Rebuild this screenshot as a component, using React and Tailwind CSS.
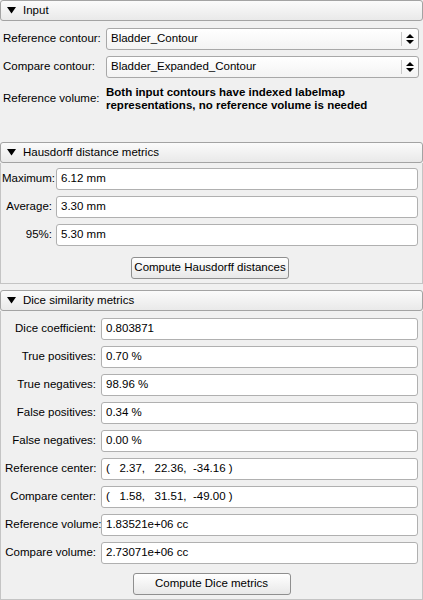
import React from "react";

const font = { fontFamily: '"Liberation Sans", Arial, sans-serif' };

const SectionHeader = ({ title }) => (
  <div className="flex h-[21px] items-center rounded-[3px] border border-[#a3a3a3] bg-gradient-to-b from-[#fbfbfb] to-[#e9e9e9] pl-[6px] text-[11.5px] text-black">
    <svg width="9" height="7" viewBox="0 0 9 7" className="mr-[7px]">
      <polygon points="0,0 9,0 4.5,6.5" fill="#000" />
    </svg>
    {title}
  </div>
);

const Field = ({ value }) => (
  <div className="flex h-[22px] min-w-0 flex-1 items-center rounded-[3px] border border-[#b0b0b0] bg-white px-[4px] text-[11.5px] text-black whitespace-pre">
    {value}
  </div>
);

const Combo = ({ value }) => (
  <div className="flex h-[22px] min-w-0 flex-1 items-center rounded-[3px] border border-[#a8a8a8] bg-gradient-to-b from-white to-[#f3f3f3] pl-[4px] text-[11.5px] text-black">
    <span className="flex-1">{value}</span>
    <div className="h-[14px] w-px bg-[#c8c8c8]" />
    <svg width="16" height="14" viewBox="0 0 16 14">
      <polygon points="4,6 12,6 8,2" fill="#000" />
      <polygon points="4,8 12,8 8,12" fill="#000" />
    </svg>
  </div>
);

const Button = ({ label }) => (
  <button className="h-[22px] w-[158px] whitespace-nowrap rounded-[3px] border border-[#8f8f8f] bg-gradient-to-b from-white to-[#e8e8e8] text-[11.5px] text-black">
    {label}
  </button>
);

const diceRows = [
  ["Dice coefficient:", "0.803871"],
  ["True positives:", "0.70 %"],
  ["True negatives:", "98.96 %"],
  ["False positives:", "0.34 %"],
  ["False negatives:", "0.00 %"],
  ["Reference center:", "(   2.37,   22.36,  -34.16 )"],
  ["Compare center:", "(   1.58,   31.51,  -49.00 )"],
  ["Reference volume:", "1.83521e+06 cc"],
  ["Compare volume:", "2.73071e+06 cc"],
];

const hausdorffRows = [
  ["Maximum:", "6.12 mm"],
  ["Average:", "3.30 mm"],
  ["95%:", "5.30 mm"],
];

export default function App() {
  return (
    <div className="h-[600px] w-[423px] overflow-hidden bg-[#f0f0f0] text-black" style={font}>
      <SectionHeader title="Input" />
      <div className="flex flex-col gap-[6px] pl-[3px] pr-[4px] pt-[7px]">
        <div className="flex items-center">
          <span className="w-[103px] shrink-0 whitespace-nowrap text-[11.5px]">Reference contour:</span>
          <Combo value="Bladder_Contour" />
        </div>
        <div className="flex items-center">
          <span className="w-[103px] shrink-0 whitespace-nowrap text-[11.5px]">Compare contour:</span>
          <Combo value="Bladder_Expanded_Contour" />
        </div>
        <div className="mt-[2px] flex items-center">
          <span className="w-[103px] shrink-0 whitespace-nowrap text-[11.5px]">Reference volume:</span>
          <p className="text-[11.5px] font-bold leading-[13px]">
            Both input contours have indexed labelmap
            <br />
            representations, no reference volume is needed
          </p>
        </div>
      </div>

      <div className="mt-[30px]">
        <SectionHeader title="Hausdorff distance metrics" />
        <div className="flex flex-col gap-[6px] border border-t-0 border-[#c4c4c4] pb-[4px] pl-[1px] pr-[4px] pt-[5px]">
          {hausdorffRows.map(([label, value]) => (
            <div key={label} className="flex items-center">
              <span className="w-[54px] shrink-0 whitespace-nowrap pr-[4px] text-right text-[11.5px]">{label}</span>
              <Field value={value} />
            </div>
          ))}
          <div className="mt-[5px] flex justify-center">
            <Button label="Compute Hausdorff distances" />
          </div>
        </div>
      </div>

      <div className="mt-[6px]">
        <SectionHeader title="Dice similarity metrics" />
        <div className="flex flex-col gap-[6px] border border-t-0 border-[#c4c4c4] px-[4px] pb-[4px] pt-[7px]">
          {diceRows.map(([label, value]) => (
            <div key={label} className="flex items-center">
              <span className="w-[96px] shrink-0 whitespace-nowrap pr-[5px] text-right text-[11.5px]">{label}</span>
              <Field value={value} />
            </div>
          ))}
          <div className="mt-[3px] flex justify-center">
            <Button label="Compute Dice metrics" />
          </div>
        </div>
      </div>
    </div>
  );
}
